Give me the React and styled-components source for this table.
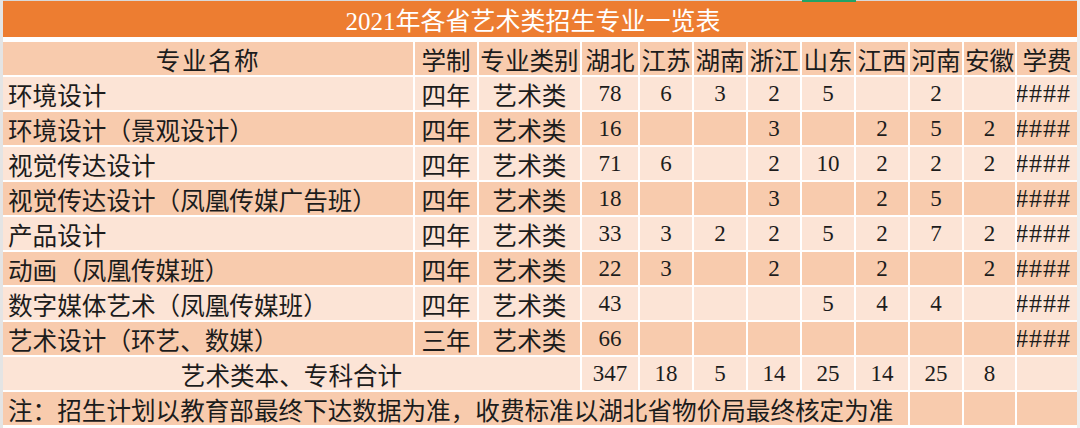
import React from 'react'
import styled, { createGlobalStyle } from 'styled-components'

const provinces = ['湖北', '江苏', '湖南', '浙江', '山东', '江西', '河南', '安徽']

const majors = [
  ['环境设计', '四年', '艺术类', ['78', '6', '3', '2', '5', '', '2', '']],
  ['环境设计（景观设计）', '四年', '艺术类', ['16', '', '', '3', '', '2', '5', '2']],
  ['视觉传达设计', '四年', '艺术类', ['71', '6', '', '2', '10', '2', '2', '2']],
  ['视觉传达设计（凤凰传媒广告班）', '四年', '艺术类', ['18', '', '', '3', '', '2', '5', '']],
  ['产品设计', '四年', '艺术类', ['33', '3', '2', '2', '5', '2', '7', '2']],
  ['动画（凤凰传媒班）', '四年', '艺术类', ['22', '3', '', '2', '', '2', '', '2']],
  ['数字媒体艺术（凤凰传媒班）', '四年', '艺术类', ['43', '', '', '', '5', '4', '4', '']],
  ['艺术设计（环艺、数媒）', '三年', '艺术类', ['66', '', '', '', '', '', '', '']],
]

const totals = ['347', '18', '5', '14', '25', '14', '25', '8']

function App() {
  return (
    <>
      <GlobalStyle />
      <Sheet>
        <SelectedMark />
        <Title>2021年各省艺术类招生专业一览表</Title>
        <Grid>
          <Cell $tone="dark" $wide>专业名称</Cell>
          <Cell $tone="dark">学制</Cell>
          <Cell $tone="dark">专业类别</Cell>
          {provinces.map((p) => (
            <Cell key={p} $tone="dark">{p}</Cell>
          ))}
          <Cell $tone="dark">学费</Cell>

          {majors.map(([name, years, kind, counts], i) => {
            const tone = i % 2 === 0 ? 'light' : 'dark'
            return (
              <React.Fragment key={name}>
                <Cell $tone={tone} $align="left">{name}</Cell>
                <Cell $tone={tone}>{years}</Cell>
                <Cell $tone={tone}>{kind}</Cell>
                {counts.map((c, j) => (
                  <NumCell key={j} $tone={tone}>{c}</NumCell>
                ))}
                <Fee $tone={tone}>####</Fee>
              </React.Fragment>
            )
          })}

          <Cell $tone="light" $span={3}>艺术类本、专科合计</Cell>
          {totals.map((t, j) => (
            <NumCell key={j} $tone="light">{t}</NumCell>
          ))}
          <Cell $tone="light" />

          <Cell $tone="dark" $span={9} $align="left">
            注：招生计划以教育部最终下达数据为准，收费标准以湖北省物价局最终核定为准
          </Cell>
          <Cell $tone="dark" />
          <Cell $tone="dark" />
          <Cell $tone="dark" />
        </Grid>
      </Sheet>
    </>
  )
}

const GlobalStyle = createGlobalStyle`
  html, body {
    margin: 0;
    padding: 0;
    background: #ffffff;
  }
`

const Sheet = styled.div`
  position: relative;
  width: 1080px;
  height: 428px;
  box-sizing: border-box;
  padding: 1px 3px 0 3px;
  background: #ffffff;
  box-shadow: inset 3px 0 0 #e4e4e4, inset -3px 0 0 #eeeeee, inset 0 1px 0 #d9d9d9;
  overflow: hidden;
  font-family: "Liberation Serif", "Noto Sans CJK SC", serif;
  color: #1c1c1c;
`

const SelectedMark = styled.div`
  position: absolute;
  top: 0;
  left: 802px;
  width: 54px;
  height: 2px;
  background: #21a366;
`

const Title = styled.div`
  height: 36px;
  margin-bottom: 5px;
  display: flex;
  align-items: center;
  justify-content: center;
  padding-right: 14px;
  background: #ed7d31;
  color: #ffffff;
  font-size: 25px;
`

const Grid = styled.div`
  display: grid;
  grid-template-columns: 410px 62px 101px 56px repeat(6, 52px) 51px 60px;
  grid-auto-rows: 33px;
  gap: 2px;
`

const Cell = styled.div`
  grid-column: span ${(p) => p.$span || 1};
  display: flex;
  align-items: center;
  justify-content: ${(p) => (p.$align === 'left' ? 'flex-start' : 'center')};
  padding: ${(p) => (p.$align === 'left' ? '0 0 0 5px' : '0')};
  background: ${(p) => (p.$tone === 'dark' ? '#f8cbad' : '#fce4d6')};
  font-size: 24.6px;
  white-space: nowrap;
  overflow: hidden;
  letter-spacing: ${(p) => (p.$wide ? '1.5px' : '0')};
`

const NumCell = styled(Cell)`
  font-size: 23px;
`

const Fee = styled(Cell)`
  justify-content: flex-end;
  padding-right: 6px;
  font-size: 26px;
  letter-spacing: 1px;
`

export default App
